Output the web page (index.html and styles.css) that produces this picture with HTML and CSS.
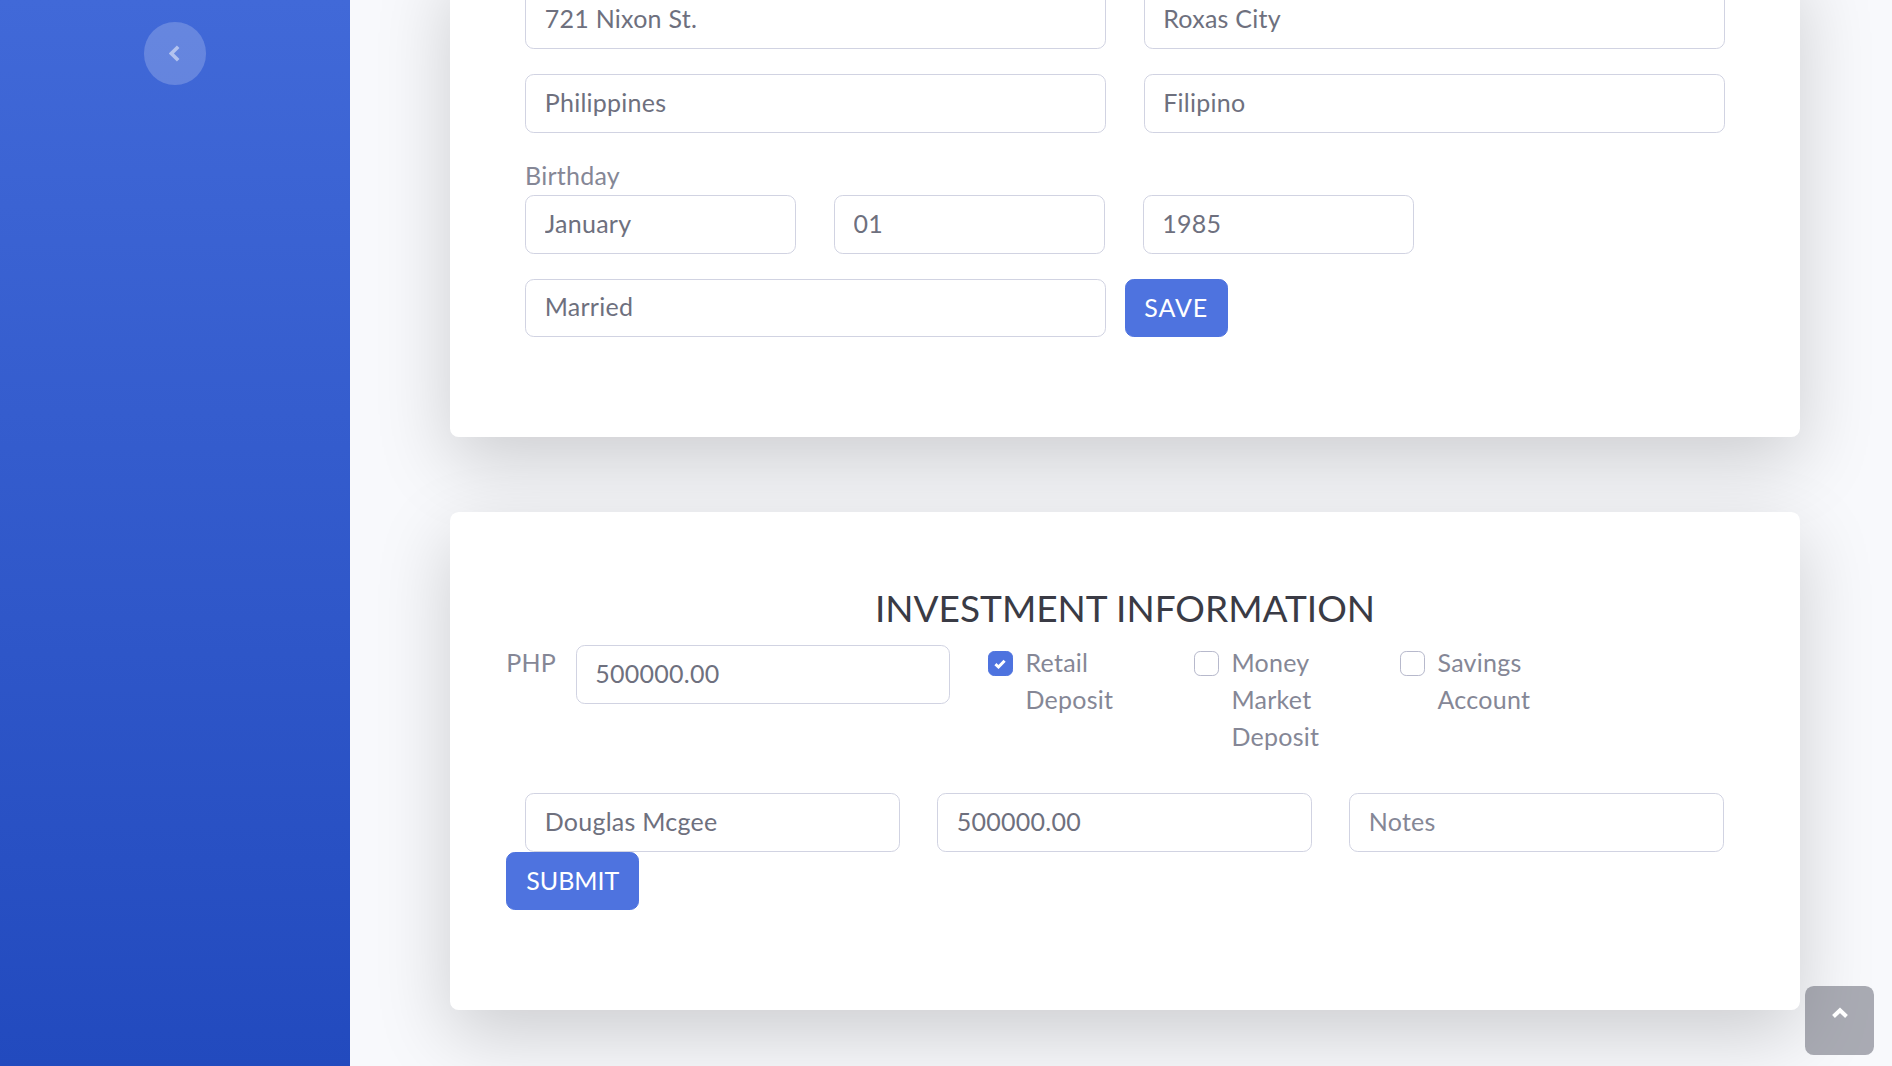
FILE: index.html
```html
<!DOCTYPE html>
<html lang="en">
<head>
<meta charset="utf-8">
<title>Investment Information</title>
<link rel="stylesheet" href="styles.css">
</head>
<body>
<div class="layout">
  <aside class="sidebar">
    <button class="toggle" type="button" aria-label="Collapse sidebar">
      <svg class="toggle-icon" viewBox="0 0 11 17"><path d="M9.2 1.8 2.4 8.5l6.8 6.7"/></svg>
    </button>
  </aside>
  <main class="main">
    <section class="card card-cut">
      <div class="row">
        <div class="col-6"><input class="field" value="721 Nixon St."></div>
        <div class="col-6"><input class="field" value="Roxas City"></div>
      </div>
      <div class="row">
        <div class="col-6"><input class="field" value="Philippines"></div>
        <div class="col-6"><input class="field" value="Filipino"></div>
      </div>
      <div class="field-label">Birthday</div>
      <div class="row">
        <div class="col-3"><input class="field" value="January"></div>
        <div class="col-3"><input class="field" value="01"></div>
        <div class="col-3"><input class="field" value="1985"></div>
      </div>
      <div class="row row-last">
        <div class="col-6"><input class="field field-short" value="Married"></div>
        <button class="btn btn-save" type="button">SAVE</button>
      </div>
    </section>
    <section class="card card-invest">
      <h3 class="title">INVESTMENT INFORMATION</h3>
      <div class="row row-invest">
        <div class="php">PHP</div>
        <div class="col-amount"><input class="field" value="500000.00"></div>
        <label class="check col-2"><span class="box box-on"><svg class="tick" viewBox="0 0 12 10"><path d="M1.4 5.2 4.5 8l6.1-6.2"/></svg></span><span>Retail Deposit</span></label>
        <label class="check col-2"><span class="box"></span><span>Money Market Deposit</span></label>
        <label class="check col-2"><span class="box"></span><span>Savings Account</span></label>
      </div>
      <div class="row row-flat">
        <div class="col-4"><input class="field" value="Douglas Mcgee"></div>
        <div class="col-4"><input class="field" value="500000.00"></div>
        <div class="col-4"><input class="field" placeholder="Notes"></div>
      </div>
      <button class="btn btn-submit" type="button">SUBMIT</button>
    </section>
  </main>
</div>
<a class="to-top" href="#" aria-label="Back to top">
  <svg class="to-top-icon" viewBox="0 0 18 12"><path d="M2.5 9.5 9 3.2l6.5 6.3"/></svg>
</a>
</body>
</html>
```
FILE: styles.css
```css
* { box-sizing: border-box; }
html, body { margin: 0; height: 100%; overflow: hidden; }
body {
  background: #f8f9fc;
  color: #858796;
  font-family: "Lato", "Open Sans", sans-serif;
  font-size: 25px;
  line-height: 37px;
  letter-spacing: .25px;
}
.layout { display: flex; height: 1066px; }
.sidebar {
  position: relative;
  z-index: 2;
  flex: 0 0 350px;
  display: flex;
  justify-content: center;
  align-items: flex-start;
  padding-top: 22px;
  background: linear-gradient(180deg, #4169d8 0%, #224abe 100%);
}
.toggle {
  width: 62.5px;
  height: 62.5px;
  padding: 0;
  border: 0;
  border-radius: 50%;
  background: rgba(255, 255, 255, .2);
  display: flex;
  align-items: center;
  justify-content: center;
}
.toggle-icon { width: 11px; height: 17px; margin-left: -1px; fill: none; stroke: rgba(255, 255, 255, .5); stroke-width: 3.6; }
.main { flex: 1; padding-left: 100px; min-width: 0; }
.card {
  width: 1350px;
  padding: 0 56.25px 100px;
  background: #fff;
  border-radius: 8.75px;
  box-shadow: 0 25px 75px rgba(0, 0, 0, .175);
  margin-bottom: 75px;
}
.card-cut { margin-top: -40px; padding-top: 30px; }
.card-invest { padding-top: 70px; }
.row { display: flex; margin-bottom: 25px; }
.row-last { margin-bottom: 0; }
.row-flat { margin-bottom: 0; }
.col-6, .col-3, .col-4, .col-amount { padding: 0 18.75px; }
.col-6 { flex: 0 0 618.5px; }
.col-3 { flex: 0 0 308.8px; }
.col-4 { flex: 0 0 412px; }
.col-amount { flex: 0 0 412px; }
.col-2 { flex: 0 0 206px; }
.field {
  display: block;
  width: 100%;
  height: 59px;
  padding: 0 18.75px 4px;
  border: 1px solid #d1d3e2;
  border-radius: 8.75px;
  background: #fff;
  color: #6e707e;
  font: inherit;
  letter-spacing: inherit;
  outline: 0;
}
.field::placeholder { color: #858796; opacity: 1; }
.field-short { height: 58px; }
.field-label { padding-left: 18.75px; height: 37px; line-height: 35px; }
.btn {
  height: 58px;
  padding: 0 0 2px;
  border: 1px solid #4e73df;
  border-radius: 8.75px;
  background: #4e73df;
  color: #fff;
  font: inherit;
  letter-spacing: 0;
}
.btn-save { flex: 0 0 103px; letter-spacing: .9px; }
.btn-submit { display: block; width: 133px; }
.title {
  margin: 0 0 10.5px;
  color: #3a3b45;
  font-size: 37px;
  font-weight: 400;
  letter-spacing: 0;
  line-height: 52.5px;
  text-align: center;
}
.row-invest { margin-bottom: 35.5px; height: 112.5px; }
.php { flex: 0 0 50.5px; margin-top: -1px; }
.check { display: flex; padding: 0 18.75px; margin-top: -1px; }
.box {
  flex: 0 0 25px;
  height: 25px;
  margin: 7px 13px 0 0;
  border: 1px solid #b7b9cc;
  border-radius: 6.25px;
  background: #fff;
  display: flex;
  align-items: center;
  justify-content: center;
}
.box-on { background: #4e73df; border-color: #4e73df; }
.tick { width: 12px; height: 10px; fill: none; stroke: #fff; stroke-width: 3; }
.to-top {
  position: fixed;
  right: 18px;
  bottom: 11px;
  width: 69px;
  height: 69px;
  border-radius: 8.75px;
  background: rgba(90, 92, 105, .5);
  display: flex;
  justify-content: center;
  padding-top: 21px;
}
.to-top-icon { width: 18px; height: 12px; fill: none; stroke: #fff; stroke-width: 4; }
```
